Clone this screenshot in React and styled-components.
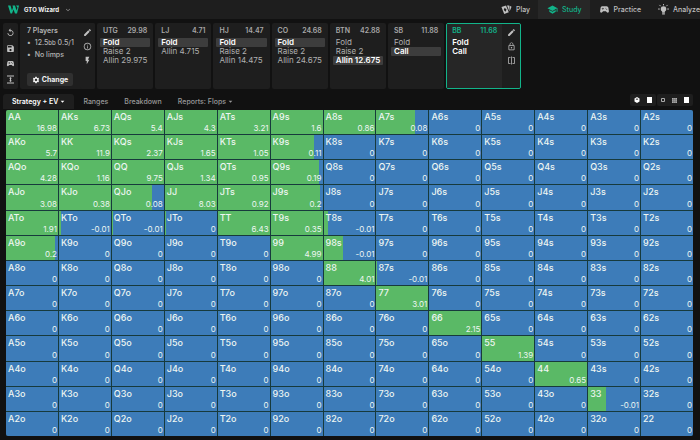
import React from 'react';
import styled, { createGlobalStyle } from 'styled-components';
import {
  MdArrowDropDown,
  MdEdit,
  MdExpandMore,
  MdFlashOn,
  MdInfoOutline,
  MdLockOutline,
  MdReplay,
  MdSave,
  MdSchool,
  MdSettings,
  MdSportsEsports,
} from 'react-icons/md';

const GREEN = '#5ab966';
const BLUE = '#3d7cb9';
const ACCENT = '#12b48a';

const RANKS = 'AKQJT98765432'.split('');

// ev and call frequency (percent) of every hand that isn't a pure fold
const HANDS = {
  AA: [16.98, 100],
  AKs: [6.73, 100],
  AQs: [5.4, 100],
  AJs: [4.3, 100],
  ATs: [3.21, 100],
  A9s: [1.6, 100],
  A8s: [0.86, 100],
  A7s: [0.08, 75],
  AKo: [5.7, 100],
  KK: [11.9, 100],
  KQs: [2.37, 100],
  KJs: [1.65, 100],
  KTs: [1.05, 100],
  K9s: [0.11, 83],
  AQo: [4.28, 100],
  KQo: [1.16, 100],
  QQ: [9.75, 100],
  QJs: [1.34, 100],
  QTs: [0.95, 100],
  Q9s: [0.19, 92],
  AJo: [3.08, 100],
  KJo: [0.38, 100],
  QJo: [0.08, 77],
  JJ: [8.03, 100],
  JTs: [0.92, 100],
  J9s: [0.2, 95],
  ATo: [1.91, 100],
  KTo: [-0.01, 4],
  QTo: [-0.01, 2],
  JTo: [0, 2],
  TT: [6.43, 100],
  T9s: [0.35, 100],
  T8s: [-0.01, 7],
  A9o: [0.2, 94],
  99: [4.99, 100],
  '98s': [-0.01, 37],
  88: [4.01, 100],
  '87s': [-0.01, 2],
  77: [3.01, 100],
  66: [2.15, 100],
  55: [1.39, 100],
  44: [0.65, 100],
  33: [-0.01, 34],
};

const SEATS = [
  { name: 'UTG', stack: '29.98', actions: ['Fold', 'Raise 2', 'Allin 29.975'], taken: 0 },
  { name: 'LJ', stack: '4.71', actions: ['Fold', 'Allin 4.715'], taken: 0 },
  { name: 'HJ', stack: '14.47', actions: ['Fold', 'Raise 2', 'Allin 14.475'], taken: 0 },
  { name: 'CO', stack: '24.68', actions: ['Fold', 'Raise 2', 'Allin 24.675'], taken: 0 },
  { name: 'BTN', stack: '42.88', actions: ['Fold', 'Raise 2', 'Allin 12.675'], taken: 2 },
  { name: 'SB', stack: '11.88', actions: ['Fold', 'Call'], taken: 1 },
];

const GlobalStyle = createGlobalStyle`
  * {
    box-sizing: border-box;
  }

  body {
    margin: 0;

    font-family: Inter, 'Liberation Sans', sans-serif;
    color: #b4b4b4;
    background: #111;
  }

  button {
    padding: 0;

    font: inherit;
    color: inherit;

    border: 0;
    background: none;
    cursor: pointer;
  }

  svg {
    display: block;
    flex: none;
  }
`;

const Page = styled.div`
  display: flex;
  flex-direction: column;
  min-height: 100vh;
`;

const TopBar = styled.header`
  display: flex;
  justify-content: space-between;
  height: 19px;
  padding-left: 8px;

  background: #1e1e1e;
`;

const Brand = styled.button`
  display: flex;
  align-items: center;
  gap: 5px;

  && {
    font-size: 6px;
    font-weight: 700;
    color: #f2f2f2;
  }

  svg:last-child {
    color: #999;
  }
`;

const Nav = styled.nav`
  display: flex;
`;

const NavLink = styled.a`
  display: flex;
  align-items: center;
  gap: 4px;
  padding: 0 8px 0 9px;

  font-size: 7px;
  font-weight: 500;
  text-decoration: none;
  white-space: nowrap;
  color: ${({ $active }) => ($active ? ACCENT : '#c0c0c0')};

  background: ${({ $active }) => ($active ? '#272727' : 'none')};

  &:last-child {
    padding-right: 0;
  }
`;

const Strip = styled.section`
  display: flex;
  gap: 2px;
  height: 66px;
  margin: 4px 3px 0;
`;

const Panel = styled.div`
  border-radius: 2px;
  background: #1e1e1e;
`;

const IconRail = styled.div`
  display: flex;
  flex-direction: column;
  align-items: center;
  justify-content: ${({ $spread }) => ($spread ? 'space-between' : 'flex-start')};
  gap: 5px;
  flex: none;
  width: ${({ $wide }) => ($wide ? 18 : 15)}px;
  padding: ${({ $wide }) => ($wide ? 4 : 5)}px 0;

  border-radius: 2px;
  color: #c0c0c0;
  background: #1e1e1e;
`;

const Setup = styled(Panel)`
  display: flex;
  flex: none;
  width: 75px;
`;

const SetupBody = styled.div`
  display: flex;
  flex-direction: column;
  flex: 1;
  padding: 2px 0 3px 7px;
`;

const SetupTitle = styled.h2`
  margin: 0;

  font-size: 7px;
  font-weight: 600;
  line-height: 12px;
`;

const SetupList = styled.ul`
  margin: 0;
  padding: 0;

  font-size: 7px;
  font-weight: 500;
  line-height: 12px;
  white-space: nowrap;
  list-style: none;

  li::before {
    content: '•';
    margin-right: 4px;
  }

  small {
    font-size: 6px;
  }
`;

const ChangeButton = styled.button`
  display: flex;
  align-items: center;
  justify-content: center;
  gap: 2px;
  width: 46px;
  height: 13px;
  margin-top: auto;

  && {
    font-size: 7px;
    font-weight: 700;
    color: #f2f2f2;

    border-radius: 2px;
    background: #303030;
  }
`;

const SeatPanel = styled(Panel)`
  flex: none;
  width: 8.1%;
  padding: 2px 3px;
`;

const ActiveSeat = styled(Panel)`
  display: flex;
  flex: none;
  overflow: hidden;
  width: 75px;

  border: 1px solid ${ACCENT};
`;

const SeatBody = styled.div`
  flex: 1;
  padding: 1px 2px;

  background: #262626;
`;

const SeatHeader = styled.div`
  display: flex;
  justify-content: space-between;
  margin-bottom: 1px;
  padding: 0 3px;

  font-size: 7px;
  font-weight: 600;
  line-height: 12px;
  color: ${({ $active }) => ($active ? ACCENT : '#a8a8a8')};
`;

const Action = styled.button`
  display: block;
  width: 100%;

  && {
    padding: 0 3px;

    font-size: 8px;
    font-weight: ${({ $bright }) => ($bright ? 600 : 400)};
    line-height: 9px;
    text-align: left;
    white-space: nowrap;
    color: ${({ $bright }) => ($bright ? '#fff' : '#b0b0b0')};

    border-radius: 1px;
    background: ${({ $taken }) => ($taken ? '#3d3d3d' : 'none')};
  }
`;

const TabBar = styled.div`
  display: flex;
  align-items: center;
  height: 15px;
  margin: 5px 7px 0 3px;
`;

const Tab = styled.button`
  display: flex;
  align-items: center;
  height: 100%;

  && {
    padding: 0 7px 0 9px;

    font-size: 7px;
    font-weight: ${({ $active }) => ($active ? 600 : 500)};
    white-space: nowrap;
    color: ${({ $active }) => ($active ? '#fff' : '#999')};

    border-radius: 3px 3px 0 0;
    background: ${({ $active }) => ($active ? '#1e1e1e' : 'none')};
  }
`;

const ViewTools = styled.div`
  display: flex;
  align-self: flex-start;
  gap: 1px;
  margin-left: auto;
`;

const ToolGroup = styled.div`
  display: flex;
  align-items: center;
  gap: 7px;
  height: 12px;
  padding: 0 4px;

  border-radius: 2px;
  background: #1e1e1e;
`;

const Matrix = styled.table`
  display: grid;
  flex: 1;
  margin: 1px 7px 4px 6px;
  overflow: hidden;

  border-radius: 2px;
  background: #173a3c;

  tbody {
    display: grid;
    grid-template-columns: repeat(13, minmax(0, 1fr));
    grid-auto-rows: minmax(24px, 1fr);
    gap: 1px;
  }

  tr {
    display: contents;
  }
`;

const HandCell = styled.td`
  display: flex;
  flex-direction: column;
  justify-content: space-between;
  padding: 1px 1px 0 2px;

  color: #eef6f2;
`;

const HandName = styled.span`
  font-size: 9px;
  font-weight: 500;
  line-height: 11px;
`;

const HandEv = styled.span`
  font-size: 8px;
  line-height: 11px;
  text-align: right;
`;

const handName = (row, col) => {
  if (row === col) return RANKS[row] + RANKS[row];
  return row < col ? `${RANKS[row]}${RANKS[col]}s` : `${RANKS[col]}${RANKS[row]}o`;
};

const Hand = ({ name }) => {
  const [ev, call] = HANDS[name] || [0, 0];
  return (
    <HandCell
      style={{
        background: `linear-gradient(to right, ${GREEN} ${call}%, ${BLUE} ${call}%)`,
      }}
    >
      <HandName>{name}</HandName>
      <HandEv>{ev}</HandEv>
    </HandCell>
  );
};

const Logo = () => (
  <svg width="11" height="9" viewBox="0 0 22 18" fill={ACCENT}>
    <path d="M0 1h5l3 10 2-6-1-4h5l3 10 2-6-3-4h6l-4 16h-4l-3-8-3 8H5z" />
  </svg>
);

const CardsIcon = () => (
  <svg width="11" height="11" viewBox="0 0 24 24" fill="currentColor">
    <path d="M1 6.500 11 3l6 15-10 4z" />
    <path d="M13 3h5v12zM19 4l4 2-4 10z" />
    <path d="m8 8 4 4-2 5-4-4z" fill="#1e1e1e" />
  </svg>
);

const BulbIcon = () => (
  <svg width="11" height="11" viewBox="0 0 24 24" fill="currentColor">
    <circle cx="12" cy="11" r="6" />
    <path d="M9 15h6v4H9zM9 20h6v3H9z" />
    <path
      d="M12 0v3M0 11h4M20 11h4M3 2l3 3M21 2l-3 3"
      stroke="currentColor"
      strokeWidth="2"
    />
  </svg>
);

const CollapseIcon = () => (
  <svg width="9" height="9" viewBox="0 0 18 18" fill="currentColor">
    <path d="M2 1h14v2H2zM2 15h14v2H2zM8 6h2v6H8z" />
    <path d="M9 4l3 3H6zM9 14l3-3H6z" />
  </svg>
);

const SplitIcon = () => (
  <svg width="9" height="9" viewBox="0 0 18 18" fill="none" stroke="currentColor" strokeWidth="1.5">
    <path d="M7 3H3v12h4M11 3h4v12h-4M9 1v16" />
  </svg>
);

const DieIcon = () => (
  <svg width="6" height="6" viewBox="0 0 12 12">
    <path d="M6 0l5 3v6l-5 3-5-3V3z" fill="#fff" />
    <path d="M3 4l3 2 3-2-3-1z" fill="#333" />
  </svg>
);

const SquareIcon = () => (
  <svg width="5" height="6" viewBox="0 0 5 6">
    <path d="M0 0h5v6H0z" fill="#fff" />
  </svg>
);

const OutlineIcon = () => (
  <svg width="4" height="4" viewBox="0 0 4 4" fill="none" stroke="#aaa">
    <path d="M.5.5h3v3h-3z" />
  </svg>
);

const GridIcon = () => (
  <svg width="5" height="5" viewBox="0 0 6 6">
    <path d="M0 0h6v6H0z" fill="#aaa" />
    <path d="M0 2h6M0 4h6M2 0v6M4 0v6" stroke="#555" strokeWidth=".5" />
  </svg>
);

const IconButton = ({ label, children }) => (
  <button type="button" aria-label={label}>
    {children}
  </button>
);

export default () => (
  <Page>
    <GlobalStyle />
    <TopBar>
      <Brand type="button">
        <Logo />
        GTO Wizard
        <MdExpandMore size={8} />
      </Brand>
      <Nav>
        <NavLink href="#play">
          <CardsIcon />
          Play
        </NavLink>
        <NavLink href="#study" $active>
          <MdSchool size={11} />
          Study
        </NavLink>
        <NavLink href="#practice">
          <MdSportsEsports size={11} />
          Practice
        </NavLink>
        <NavLink href="#analyze">
          <BulbIcon />
          Analyze
        </NavLink>
      </Nav>
    </TopBar>

    <Strip>
      <IconRail $spread>
        <IconButton label="Reset">
          <MdReplay size={9} />
        </IconButton>
        <IconButton label="Save">
          <MdSave size={9} />
        </IconButton>
        <IconButton label="Practice spot">
          <MdSportsEsports size={9} />
        </IconButton>
        <IconButton label="Collapse">
          <CollapseIcon />
        </IconButton>
      </IconRail>

      <Setup>
        <SetupBody>
          <SetupTitle>7 Players</SetupTitle>
          <SetupList>
            <li>
              12.5<small>bb</small> 0.5/1
            </li>
            <li>No limps</li>
          </SetupList>
          <ChangeButton type="button">
            <MdSettings size={8} />
            Change
          </ChangeButton>
        </SetupBody>
        <IconRail>
          <IconButton label="Edit setup">
            <MdEdit size={9} />
          </IconButton>
          <IconButton label="Info">
            <MdInfoOutline size={9} />
          </IconButton>
          <IconButton label="Quick solve">
            <MdFlashOn size={9} />
          </IconButton>
        </IconRail>
      </Setup>

      {SEATS.map(({ name, stack, actions, taken }) => (
        <SeatPanel key={name}>
          <SeatHeader>
            <span>{name}</span>
            <span>{stack}</span>
          </SeatHeader>
          {actions.map((action, i) => (
            <Action key={action} type="button" $taken={i === taken} $bright={i === taken}>
              {action}
            </Action>
          ))}
        </SeatPanel>
      ))}

      <ActiveSeat>
        <SeatBody>
          <SeatHeader $active>
            <span>BB</span>
            <span>11.68</span>
          </SeatHeader>
          <Action type="button" $bright>
            Fold
          </Action>
          <Action type="button" $bright>
            Call
          </Action>
        </SeatBody>
        <IconRail $wide>
          <IconButton label="Edit range">
            <MdEdit size={9} />
          </IconButton>
          <IconButton label="Lock node">
            <MdLockOutline size={9} />
          </IconButton>
          <IconButton label="Compare">
            <SplitIcon />
          </IconButton>
        </IconRail>
      </ActiveSeat>
    </Strip>

    <TabBar>
      <Tab type="button" $active>
        Strategy + EV
        <MdArrowDropDown size={9} />
      </Tab>
      <Tab type="button">Ranges</Tab>
      <Tab type="button">Breakdown</Tab>
      <Tab type="button">
        Reports: Flops
        <MdArrowDropDown size={9} />
      </Tab>
      <ViewTools>
        <ToolGroup>
          <IconButton label="Suits">
            <DieIcon />
          </IconButton>
          <IconButton label="Solid cells">
            <SquareIcon />
          </IconButton>
        </ToolGroup>
        <ToolGroup>
          <IconButton label="Small cells">
            <OutlineIcon />
          </IconButton>
          <IconButton label="Grid cells">
            <GridIcon />
          </IconButton>
          <IconButton label="Full cells">
            <SquareIcon />
          </IconButton>
        </ToolGroup>
      </ViewTools>
    </TabBar>

    <Matrix>
      <tbody>
        {RANKS.map((rank, row) => (
          <tr key={rank}>
            {RANKS.map((_, col) => (
              <Hand key={handName(row, col)} name={handName(row, col)} />
            ))}
          </tr>
        ))}
      </tbody>
    </Matrix>
  </Page>
);
